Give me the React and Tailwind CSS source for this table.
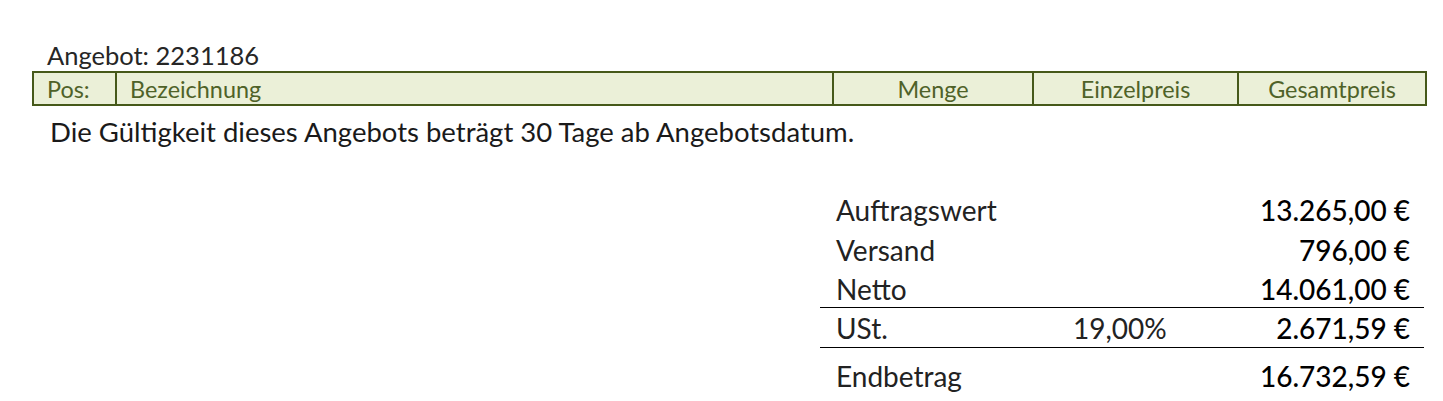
export default function App() {
  const rows = [
    { label: 'Auftragswert', value: '13.265,00 €', h: 'h-[41px]' },
    { label: 'Versand', value: '796,00 €', h: 'h-[40px]' },
    { label: 'Netto', value: '14.061,00 €', h: 'h-[38px] border-b border-black' },
    { label: 'USt.', rate: '19,00%', value: '2.671,59 €', h: 'h-[40px] border-b border-black' },
    { label: 'Endbetrag', value: '16.732,59 €', h: 'h-[56px]' },
  ];

  return (
    <div className="w-[1443px] h-[401px] overflow-hidden bg-white font-['Lato','Open_Sans',sans-serif] text-[#1a1a1a]">
      <div className="pl-[32px] pt-[39px]">
        {/* Kopf */}
        <div className="pl-[15px] text-[25.5px] leading-[32px] text-[#262626]">Angebot: 2231186</div>

        {/* Tabellenkopf */}
        <div className="flex w-[1395px] h-[35px] border-2 border-[#46591a] bg-[#ebf0d8] text-[23.4px] text-[#4f6228]">
          <div className="w-[81px] pl-[13px] pt-[2px] flex items-center">Pos:</div>
          <div className="w-[717px] pl-[13px] pt-[2px] flex items-center border-l-2 border-[#46591a]">Bezeichnung</div>
          <div className="w-[200px] pt-[2px] flex items-center justify-center border-l-2 border-[#46591a]">Menge</div>
          <div className="w-[205px] pt-[2px] flex items-center justify-center border-l-2 border-[#46591a]">Einzelpreis</div>
          <div className="w-[188px] pt-[2px] flex items-center justify-center border-l-2 border-[#46591a]">Gesamtpreis</div>
        </div>

        <div className="pl-[18px] pt-[10px] text-[27.5px] leading-[32px]">
          Die Gültigkeit dieses Angebots beträgt 30 Tage ab Angebotsdatum.
        </div>

        {/* Summen */}
        <div className="ml-[788px] mt-[41px] w-[604px] text-[28px]">
          {rows.map(r => (
            <div key={r.label} className={`flex items-center ${r.h}`}>
              <div className="w-[253px] pl-[16px] text-[#222]">{r.label}</div>
              <div className="w-[150px] text-[#222]">{r.rate || ''}</div>
              <div className="flex-1 text-right pr-[14px] font-medium text-black">{r.value}</div>
            </div>
          ))}
        </div>
      </div>
    </div>
  );
}
